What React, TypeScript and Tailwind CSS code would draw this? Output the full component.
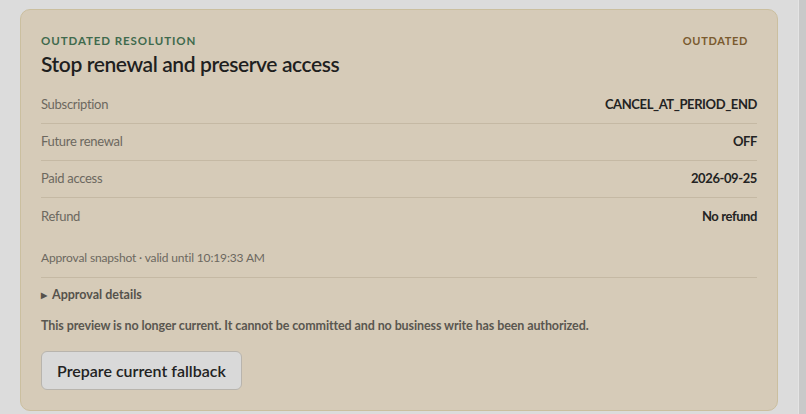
import React from "react";

const rows: { label: string; value: string }[] = [
  { label: "Subscription", value: "CANCEL_AT_PERIOD_END" },
  { label: "Future renewal", value: "OFF" },
  { label: "Paid access", value: "2026-09-25" },
  { label: "Refund", value: "No refund" },
];

export default function App() {
  return (
    <div
      className="flex h-[414px] w-[806px] overflow-hidden bg-[#dcdcdc]"
      style={{ fontFamily: 'Lato, "Noto Sans", sans-serif' }}
    >
      <div className="flex-1 pl-5 pr-5 pt-[9px]">
        <div className="rounded-[10px] border border-[#cbbf9f] bg-[#d6cbb8] px-5 pt-[23px] pb-5">
          <div className="flex items-start justify-between">
            <div>
              <div className="text-[11.5px] font-bold leading-4 tracking-[0.08em] text-[#3f6a4d]">
                OUTDATED RESOLUTION
              </div>
              <h1 className="mt-[1px] text-[21px] font-semibold leading-7 tracking-[-0.4px] text-[#1f1f1f]">
                Stop renewal and preserve access
              </h1>
            </div>
            <div className="pr-[9px] text-[11px] font-bold leading-4 tracking-[0.06em] text-[#7a5a2e]">
              OUTDATED
            </div>
          </div>

          <div className="mt-[9px]">
            {rows.map((r, i) => (
              <div
                key={r.label}
                className={`flex h-[37px] items-center justify-between text-[13px] ${
                  i < rows.length - 1 ? "border-b border-[#c5b9a4]" : ""
                }`}
              >
                <span className="tracking-[-0.3px] text-[#6c685f]">{r.label}</span>
                <span className="font-bold tracking-[-0.4px] text-[#232323]">{r.value}</span>
              </div>
            ))}
          </div>

          <div className="border-b border-[#c5b9a4] pt-[15px] pb-[11px] text-[12px] leading-4 tracking-[-0.15px] text-[#6c685f]">
            Approval snapshot · valid until 10:19:33 AM
          </div>

          <div className="flex items-center gap-[5px] pt-[9px] text-[12.5px] font-bold leading-4 text-[#55524c]">
            <span className="text-[8px]">▶</span>
            <span>Approval details</span>
          </div>

          <p className="mt-[15px] text-[12.5px] font-bold leading-4 tracking-[-0.1px] text-[#5a5750]">
            This preview is no longer current. It cannot be committed and no business write has been authorized.
          </p>

          <button className="mt-[17px] h-[39px] rounded-md border border-[#b8b4ad] bg-[#d9d9d9] px-[15px] text-[16px] font-semibold text-[#222]">
            Prepare current fallback
          </button>
        </div>
      </div>
      <div className="w-[8px] border-l border-[#e4e4e4] bg-[#c9c9c9]" />
    </div>
  );
}
